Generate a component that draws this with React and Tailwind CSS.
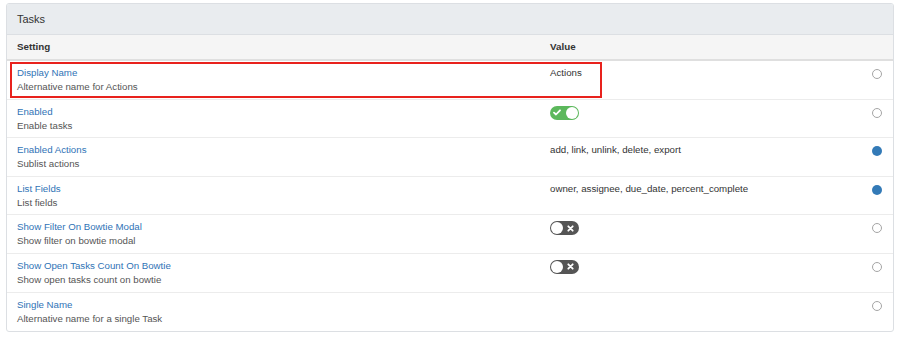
import React from 'react';

const rows = [
  { name: 'Display Name', desc: 'Alternative name for Actions', value: 'Actions', on: false, highlight: true },
  { name: 'Enabled', desc: 'Enable tasks', toggle: true, on: false },
  { name: 'Enabled Actions', desc: 'Sublist actions', value: 'add, link, unlink, delete, export', on: true },
  { name: 'List Fields', desc: 'List fields', value: 'owner, assignee, due_date, percent_complete', on: true },
  { name: 'Show Filter On Bowtie Modal', desc: 'Show filter on bowtie modal', toggle: false, on: false },
  { name: 'Show Open Tasks Count On Bowtie', desc: 'Show open tasks count on bowtie', toggle: false, on: false },
  { name: 'Single Name', desc: 'Alternative name for a single Task', on: false },
];

const Toggle = ({ checked }) =>
  checked ? (
    <div className="w-[29px] h-[14px] rounded-full bg-[#5cb85c] flex items-center justify-between pl-[3px] pr-[1px]">
      <svg width="8" height="7" viewBox="0 0 8 7">
        <path d="M1 3.6 L3 5.5 L7 1.3" stroke="white" strokeWidth="1.8" fill="none" strokeLinecap="round" strokeLinejoin="round" />
      </svg>
      <div className="w-[12px] h-[12px] rounded-full bg-white" />
    </div>
  ) : (
    <div className="w-[29px] h-[14px] rounded-full bg-[#555] flex items-center justify-between pl-[1px] pr-[5px]">
      <div className="w-[12px] h-[12px] rounded-full bg-white" />
      <svg width="7" height="7" viewBox="0 0 7 7">
        <path d="M1.3 1.3 L5.7 5.7 M5.7 1.3 L1.3 5.7" stroke="white" strokeWidth="1.8" strokeLinecap="round" />
      </svg>
    </div>
  );

const Radio = ({ on }) =>
  on ? (
    <div className="w-[10px] h-[10px] rounded-full bg-[#337ab7]" />
  ) : (
    <div className="w-[10px] h-[10px] rounded-full border border-[#a5a5a5] bg-white" />
  );

export default function App() {
  return (
    <div className="w-[904px] h-[340px] bg-white pt-[3px] px-[6px] font-['Liberation_Sans',Arial,sans-serif] text-[#333]">
      <div className="w-[888px] border border-[#dcdfe3] rounded-[3px] overflow-hidden">
        <div className="h-[31px] bg-[#e9ecef] border-b border-[#dcdfe3] flex items-center px-[10px] text-[11px]">
          Tasks
        </div>
        <div className="h-[26px] bg-[#f5f5f5] border-b-2 border-[#dfdfdf] grid grid-cols-[533px_1fr] items-center px-[10px] text-[9.8px] font-bold">
          <span>Setting</span>
          <span>Value</span>
        </div>
        {rows.map((r, i) => (
          <div
            key={r.name}
            className={`h-[38.6px] grid grid-cols-[533px_1fr_30px] px-[10px] pt-[5px] text-[9.7px] leading-[14px] ${
              i < rows.length - 1 ? 'border-b border-[#ececec]' : ''
            } relative`}
          >
            {r.highlight && (
              <div className="absolute left-[3px] top-[1px] w-[592px] h-[36px] border-2 border-[#e8221d]" />
            )}
            <div>
              <div className="text-[#2f73b6]">{r.name}</div>
              <div className="text-[#555]">{r.desc}</div>
            </div>
            <div>
              {r.toggle !== undefined ? (
                <div className="pt-[1px]">
                  <Toggle checked={r.toggle} />
                </div>
              ) : (
                <span>{r.value}</span>
              )}
            </div>
            <div className="flex justify-end pt-[3px] pr-[1px]">
              <Radio on={r.on} />
            </div>
          </div>
        ))}
      </div>
    </div>
  );
}
